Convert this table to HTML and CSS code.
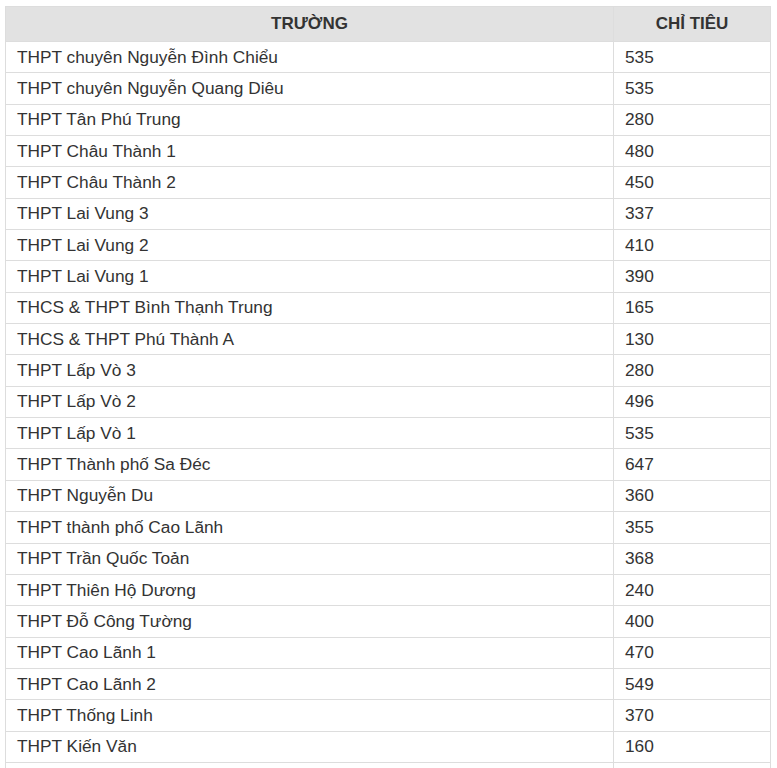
FILE: index.html
```html
<!DOCTYPE html>
<html lang="vi">
<head>
<meta charset="utf-8">
<link rel="stylesheet" href="styles.css">
</head>
<body>
<table class="quota">
<thead>
<tr><th class="c-name">TRƯỜNG</th><th class="c-num">CHỈ TIÊU</th></tr>
</thead>
<tbody>
<tr><td>THPT chuyên Nguyễn Đình Chiểu</td><td>535</td></tr>
<tr><td>THPT chuyên Nguyễn Quang Diêu</td><td>535</td></tr>
<tr><td>THPT Tân Phú Trung</td><td>280</td></tr>
<tr><td>THPT Châu Thành 1</td><td>480</td></tr>
<tr><td>THPT Châu Thành 2</td><td>450</td></tr>
<tr><td>THPT Lai Vung 3</td><td>337</td></tr>
<tr><td>THPT Lai Vung 2</td><td>410</td></tr>
<tr><td>THPT Lai Vung 1</td><td>390</td></tr>
<tr><td>THCS &amp; THPT Bình Thạnh Trung</td><td>165</td></tr>
<tr><td>THCS &amp; THPT Phú Thành A</td><td>130</td></tr>
<tr><td>THPT Lấp Vò 3</td><td>280</td></tr>
<tr><td>THPT Lấp Vò 2</td><td>496</td></tr>
<tr><td>THPT Lấp Vò 1</td><td>535</td></tr>
<tr><td>THPT Thành phố Sa Đéc</td><td>647</td></tr>
<tr><td>THPT Nguyễn Du</td><td>360</td></tr>
<tr><td>THPT thành phố Cao Lãnh</td><td>355</td></tr>
<tr><td>THPT Trần Quốc Toản</td><td>368</td></tr>
<tr><td>THPT Thiên Hộ Dương</td><td>240</td></tr>
<tr><td>THPT Đỗ Công Tường</td><td>400</td></tr>
<tr><td>THPT Cao Lãnh 1</td><td>470</td></tr>
<tr><td>THPT Cao Lãnh 2</td><td>549</td></tr>
<tr><td>THPT Thống Linh</td><td>370</td></tr>
<tr><td>THPT Kiến Văn</td><td>160</td></tr>
<tr class="blank"><td></td><td></td></tr>
</tbody>
</table>
</body>
</html>
```
FILE: styles.css
```css
html, body {
  margin: 0;
  padding: 0;
  background: #ffffff;
}
body {
  padding: 6px 6px 0 5px;
  font-family: "Liberation Sans", Arial, sans-serif;
  color: #333333;
}
.quota {
  width: 766px;
  border-collapse: collapse;
  table-layout: fixed;
}
.quota th,
.quota td {
  border: 1px solid #dddddd;
  padding: 0 11px;
  text-align: left;
  vertical-align: middle;
}
.quota th {
  background: #e2e2e2;
  height: 34px;
  font-size: 17px;
  font-weight: bold;
  text-align: center;
  color: #333333;
}
.quota .c-num {
  width: 134px;
}
.quota td {
  height: 30.35px;
  font-size: 17.3px;
}
```
